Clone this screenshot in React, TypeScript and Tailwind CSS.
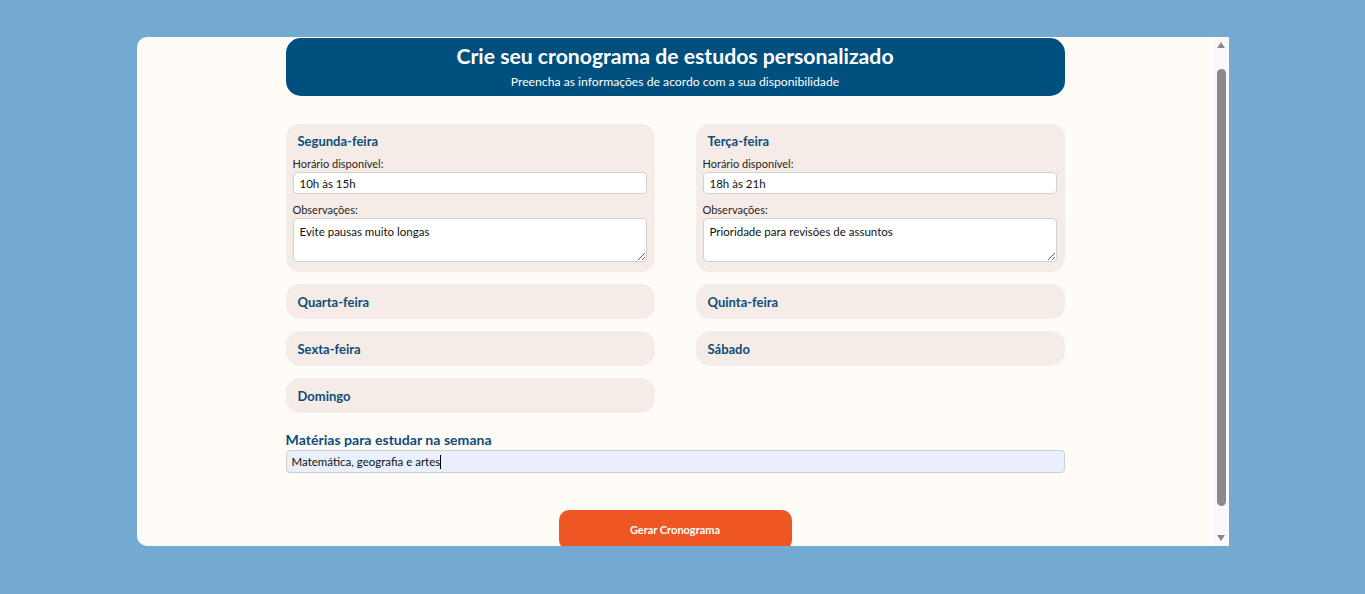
import React from "react";

const font = "font-['Lato','Open_Sans',sans-serif]";

function DayCard({
  title,
  horario,
  obs,
}: {
  title: string;
  horario?: string;
  obs?: string;
}) {
  const expanded = horario !== undefined;
  return (
    <div className="bg-[#f5ece8] rounded-[14px] px-[7px] pr-[8px]">
      <div className={`${expanded ? "h-[34px]" : "h-[35px]"} flex items-center pl-[5px]`}>
        <span className="text-[13px] font-bold text-[#0d4d7b] leading-[16px]">{title}</span>
      </div>
      {expanded && (
        <div className="flex flex-col pb-[10px]">
          <label className="text-[11px] leading-[12px] text-[#1f1f1f]">Horário disponível:</label>
          <input
            readOnly
            value={horario}
            className="mt-[2px] h-[22px] w-full rounded-[4px] border border-[#cfcfcf] bg-white px-[6px] text-[11.5px] text-[#111] outline-none"
          />
          <label className="mt-[10px] text-[11px] leading-[12px] text-[#1f1f1f]">Observações:</label>
          <textarea
            readOnly
            value={obs}
            className="mt-[2px] h-[44px] w-full rounded-[4px] border border-[#cfcfcf] bg-white px-[6px] py-[6px] text-[11.5px] leading-[14px] text-[#111] outline-none"
          />
        </div>
      )}
    </div>
  );
}

export default function App() {
  return (
    <div className={`${font} min-h-[594px] w-full bg-[#74aad2] pt-[37px]`}>
      <div className="mx-auto flex h-[509px] w-[1092px] overflow-hidden rounded-l-[10px] bg-[#fffcf8]">
        <div className="flex-1 overflow-hidden">
          <div className="mx-auto w-[779px] pt-[1px]">
            <div className="flex h-[58px] flex-col items-center rounded-[15px] bg-[#00507f] pt-[6px] text-white">
              <h1 className="text-[21.2px] font-bold leading-[25px]">Crie seu cronograma de estudos personalizado</h1>
              <p className="mt-[6px] text-[12.2px] leading-[14px]">Preencha as informações de acordo com a sua disponibilidade</p>
            </div>

            <div className="mt-[28px] grid grid-cols-2 items-start gap-x-[41px] gap-y-[12px]">
              <DayCard title="Segunda-feira" horario="10h às 15h" obs="Evite pausas muito longas" />
              <DayCard title="Terça-feira" horario="18h às 21h" obs="Prioridade para revisões de assuntos" />
              <DayCard title="Quarta-feira" />
              <DayCard title="Quinta-feira" />
              <DayCard title="Sexta-feira" />
              <DayCard title="Sábado" />
              <DayCard title="Domingo" />
            </div>

            <div className="mt-[19px] text-[14.1px] font-bold leading-[16px] text-[#0d4d7b]">
              Matérias para estudar na semana
            </div>
            <div className="mt-[2px] flex h-[23px] items-center rounded-[4px] border border-[#cfcfcf] bg-[#e8f0fe] px-[5px] text-[11.5px] text-[#111]">
              Matemática, geografia e artes
              <span className="inline-block h-[14px] w-px bg-black" />
            </div>

            <div className="mt-[37px] flex justify-center">
              <button className="h-[40px] w-[233px] rounded-[10px] bg-[#ee5624] text-[11px] font-bold text-white">
                Gerar Cronograma
              </button>
            </div>
          </div>
        </div>

        <div className="flex w-[15px] flex-col items-center bg-[#f9f9fb]">
          <div className="mt-[5px] h-0 w-0 border-x-[4.5px] border-b-[6px] border-x-transparent border-b-[#8a8a8a]" />
          <div className="mt-[21px] h-[437px] w-[9px] rounded-full bg-[#8a8a8a]" />
          <div className="mt-[29px] h-0 w-0 border-x-[4.5px] border-t-[6px] border-x-transparent border-t-[#8a8a8a]" />
        </div>
      </div>
    </div>
  );
}
